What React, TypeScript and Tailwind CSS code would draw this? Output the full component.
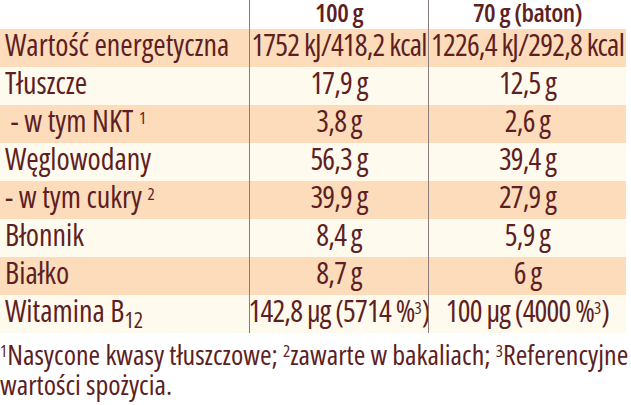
const ORANGE = "bg-[#fcdcbb]";
const CREAM = "bg-[#fffaee]";

type Row = { label: React.ReactNode; a: React.ReactNode; b: React.ReactNode };

const Sup = ({ children }: { children: React.ReactNode }) => (
  <sup className="text-[17px] tracking-normal">{children}</sup>
);

const rows: Row[] = [
  { label: "Wartość energetyczna", a: "1752 kJ/418,2 kcal", b: "1226,4 kJ/292,8 kcal" },
  { label: "Tłuszcze", a: "17,9 g", b: "12,5 g" },
  {
    label: (
      <>
        {"\u00a0- w tym NKT "}
        <Sup>1</Sup>
      </>
    ),
    a: "3,8 g",
    b: "2,6 g",
  },
  { label: "Węglowodany", a: "56,3 g", b: "39,4 g" },
  {
    label: (
      <>
        {"- w tym cukry "}
        <Sup>2</Sup>
      </>
    ),
    a: "39,9 g",
    b: "27,9 g",
  },
  { label: "Błonnik", a: "8,4 g", b: "5,9 g" },
  { label: "Białko", a: "8,7 g", b: "6 g" },
  {
    label: (
      <>
        Witamina B<sub className="text-[22px]">12</sub>
      </>
    ),
    a: (
      <>
        142,8 µg (5714 %<Sup>3</Sup>)
      </>
    ),
    b: (
      <>
        100 µg (4000 %<Sup>3</Sup>)
      </>
    ),
  },
];

const numCell =
  "h-[38px] border-l border-[#8c7b7b] flex justify-center text-[30px] leading-[31px] tracking-[-0.8px] whitespace-nowrap";

const headCell =
  "h-[29px] border-l border-[#8c7b7b] flex justify-center items-start text-[26px] font-semibold leading-[24px] tracking-[-0.5px] whitespace-nowrap";

export default function App() {
  return (
    <div className="w-[631px] h-[405px] bg-white text-[#5e1f24] font-['Open_Sans',sans-serif] [font-stretch:75%] overflow-hidden">
      <div className="grid grid-cols-[249px_179px_198px] w-[626px]">
        <div className="h-[29px]" />
        <div className={headCell}>100 g</div>
        <div className={headCell}>70 g (baton)</div>
        {rows.map((r, i) => {
          const bg = i % 2 === 0 ? ORANGE : CREAM;
          return (
            <div key={i} className="contents">
              <div className={`${bg} h-[38px] pl-[5px] text-[30px] leading-[31px] whitespace-nowrap`}>{r.label}</div>
              <div className={`${bg} ${numCell}`}>
                <span>{r.a}</span>
              </div>
              <div className={`${bg} ${numCell}`}>
                <span>{r.b}</span>
              </div>
            </div>
          );
        })}
      </div>
      <div className="text-[28px] leading-[30px] pt-[6px] whitespace-nowrap">
        <Sup>1</Sup>Nasycone kwasy tłuszczowe; <Sup>2</Sup>zawarte w bakaliach; <Sup>3</Sup>Referencyjne
        <br />
        wartości spożycia.
      </div>
    </div>
  );
}
